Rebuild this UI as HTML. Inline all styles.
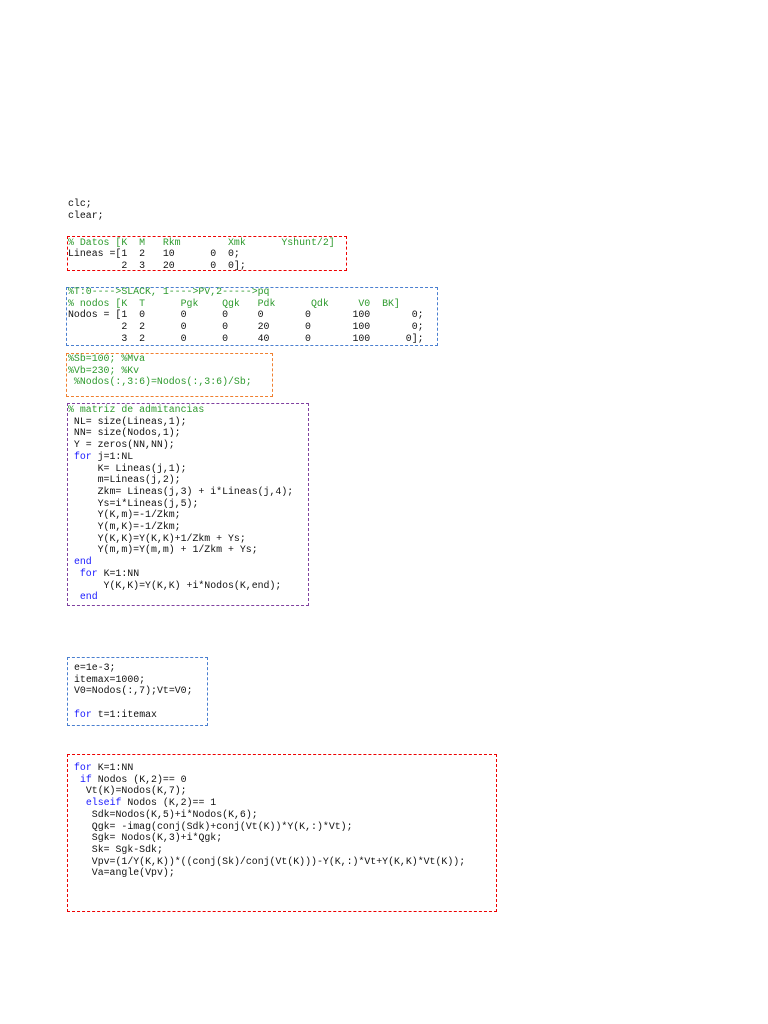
<!DOCTYPE html>
<html><head><meta charset="utf-8"><style>
body{margin:0;width:768px;height:1024px;background:#fff;position:relative;overflow:hidden}
pre{position:absolute;margin:0;font-family:"Liberation Mono",monospace;font-size:9.9px;line-height:11.7px;color:#111}
.c{color:#2e9a2e}.k{color:#1a1aff}
.b{position:absolute;border:1px dashed}
</style></head><body>
<div class="b" style="left:67px;top:236px;width:278px;height:33px;border-color:#e00"></div>
<div class="b" style="left:66px;top:287px;width:370px;height:57px;border-color:#4a7fd0"></div>
<div class="b" style="left:66px;top:353px;width:205px;height:42px;border-color:#f08030"></div>
<div class="b" style="left:67px;top:403px;width:240px;height:201px;border-color:#8040a0"></div>
<div class="b" style="left:67px;top:657px;width:139px;height:67px;border-color:#4a7fd0"></div>
<div class="b" style="left:67px;top:754px;width:428px;height:156px;border-color:#e00"></div>

<pre style="left:68px;top:198px">clc;
clear;</pre>

<pre style="left:68px;top:236.5px"><span class="c">% Datos [K  M   Rkm        Xmk      Yshunt/2]</span>
Lineas =[1  2   10      0  0;
         2  3   20      0  0];</pre>

<pre style="left:68px;top:286px"><span class="c">%T:0---->SLACK, 1---->PV,2----->pq</span>
<span class="c">% nodos [K  T      Pgk    Qgk   Pdk      Qdk     V0  BK]</span>
Nodos = [1  0      0      0     0       0       100       0;
         2  2      0      0     20      0       100       0;
         3  2      0      0     40      0       100      0];</pre>

<pre style="left:68px;top:353px"><span class="c">%Sb=100; %Mva
%Vb=230; %Kv
 %Nodos(:,3:6)=Nodos(:,3:6)/Sb;</span></pre>

<pre style="left:68px;top:404px"><span class="c">% matriz de admitancias</span>
 NL= size(Lineas,1);
 NN= size(Nodos,1);
 Y = zeros(NN,NN);
 <span class="k">for</span> j=1:NL
     K= Lineas(j,1);
     m=Lineas(j,2);
     Zkm= Lineas(j,3) + i*Lineas(j,4);
     Ys=i*Lineas(j,5);
     Y(K,m)=-1/Zkm;
     Y(m,K)=-1/Zkm;
     Y(K,K)=Y(K,K)+1/Zkm + Ys;
     Y(m,m)=Y(m,m) + 1/Zkm + Ys;
 <span class="k">end</span>
  <span class="k">for</span> K=1:NN
      Y(K,K)=Y(K,K) +i*Nodos(K,end);
  <span class="k">end</span></pre>

<pre style="left:74px;top:662px">e=1e-3;
itemax=1000;
V0=Nodos(:,7);Vt=V0;

<span class="k">for</span> t=1:itemax</pre>

<pre style="left:74px;top:762px"><span class="k">for</span> K=1:NN
 <span class="k">if</span> Nodos (K,2)== 0
  Vt(K)=Nodos(K,7);
  <span class="k">elseif</span> Nodos (K,2)== 1
   Sdk=Nodos(K,5)+i*Nodos(K,6);
   Qgk= -imag(conj(Sdk)+conj(Vt(K))*Y(K,:)*Vt);
   Sgk= Nodos(K,3)+i*Qgk;
   Sk= Sgk-Sdk;
   Vpv=(1/Y(K,K))*((conj(Sk)/conj(Vt(K)))-Y(K,:)*Vt+Y(K,K)*Vt(K));
   Va=angle(Vpv);</pre>
</body></html>
